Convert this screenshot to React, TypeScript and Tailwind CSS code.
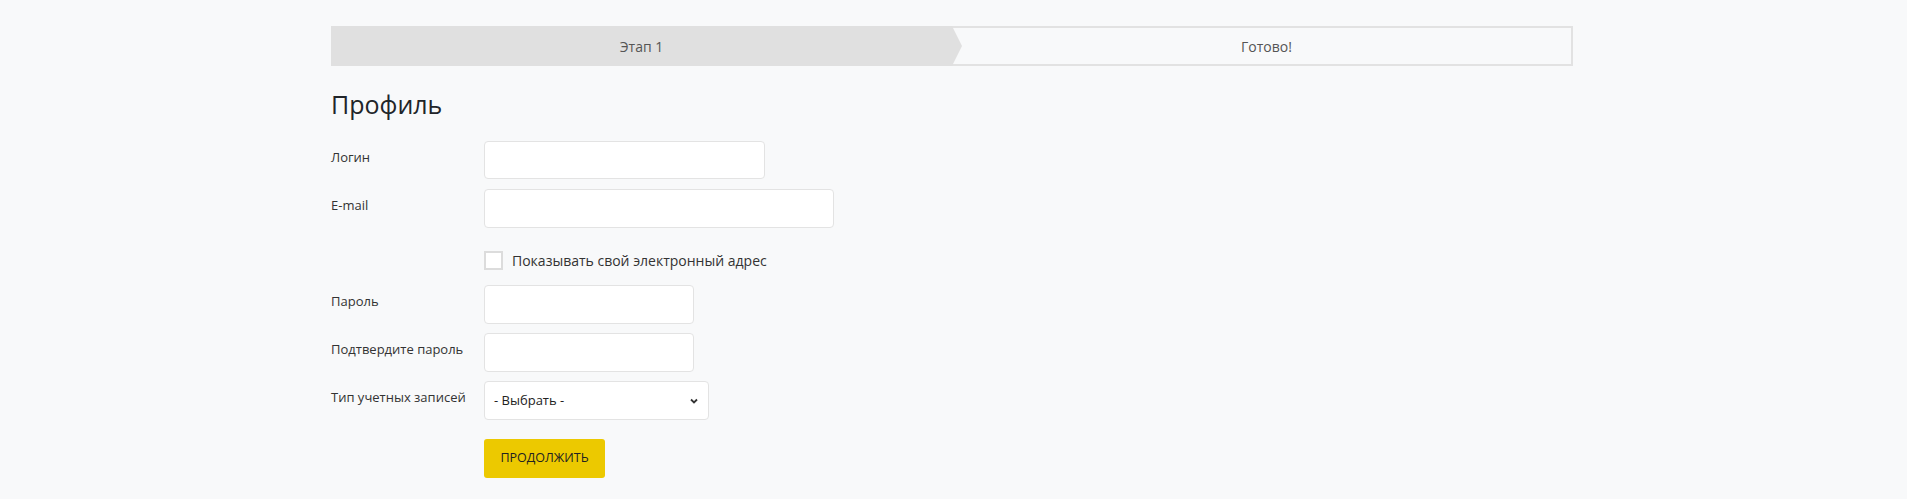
import React from "react";

const font = { fontFamily: '"Open Sans", "Noto Sans", Arial, sans-serif' };

function Label({ children }: { children: React.ReactNode }) {
  return (
    <div className="w-[153px] shrink-0 pt-[6px] text-[13px] leading-[20px] text-[#333]">{children}</div>
  );
}

export default function App() {
  return (
    <div className="h-[499px] w-full overflow-hidden bg-[#f8f9fa]" style={font}>
      <div className="mx-auto w-[1245px] pt-[26px]">
        {/* steps */}
        <div className="flex h-[40px] w-[1242px]">
          <div className="relative flex w-1/2 items-center justify-center bg-[#e0e0e0] text-[14px] text-[#555]">
            <span>Этап 1</span>
            <div className="absolute right-[-10px] top-0 z-10 h-full w-[10px] bg-[#e0e0e0] [clip-path:polygon(0_0,100%_50%,0_100%)]" />
          </div>
          <div className="flex flex-1 items-center justify-center border-2 border-l-0 border-[#e2e2e2] pl-[10px] text-[14px] text-[#555]">
            <span>Готово!</span>
          </div>
        </div>

        <h1 className="mt-[21px] text-[25px] leading-[34px] font-normal text-[#212529]">Профиль</h1>

        <div className="mt-[20px] flex flex-col">
          <div className="flex">
            <Label>Логин</Label>
            <div className="h-[38px] w-[281px] rounded-[4px] border border-[#e3e3e3] bg-white" />
          </div>
          <div className="mt-[10px] flex">
            <Label>E-mail</Label>
            <div className="h-[39px] w-[350px] rounded-[4px] border border-[#e3e3e3] bg-white" />
          </div>
          <div className="mt-[23px] flex">
            <div className="w-[153px] shrink-0" />
            <label className="flex items-center gap-[9px] text-[14px] leading-[19px] text-[#333]">
              <span className="h-[19px] w-[19px] border-2 border-[#dcdcdc] bg-white" />
              Показывать свой электронный адрес
            </label>
          </div>
          <div className="mt-[15px] flex">
            <Label>Пароль</Label>
            <div className="h-[39px] w-[210px] rounded-[4px] border border-[#e3e3e3] bg-white" />
          </div>
          <div className="mt-[9px] flex">
            <Label>Подтвердите пароль</Label>
            <div className="h-[39px] w-[210px] rounded-[4px] border border-[#e3e3e3] bg-white" />
          </div>
          <div className="mt-[9px] flex">
            <Label>Тип учетных записей</Label>
            <div className="flex h-[39px] w-[225px] items-center justify-between rounded-[4px] border border-[#e3e3e3] bg-white pl-[9px] pr-[10px] text-[13px] text-[#222]">
              <span>- Выбрать -</span>
              <svg width="8" height="6" viewBox="0 0 8 6" fill="none">
                <path d="M1 1.5 L4 4.5 L7 1.5" stroke="#333" strokeWidth="1.8" />
              </svg>
            </div>
          </div>
          <div className="mt-[19px] flex">
            <div className="w-[153px] shrink-0" />
            <button className="h-[39px] w-[121px] rounded-[3px] bg-[#ecc900] text-[12.5px] text-[#222] uppercase">
              Продолжить
            </button>
          </div>
        </div>
      </div>
    </div>
  );
}
